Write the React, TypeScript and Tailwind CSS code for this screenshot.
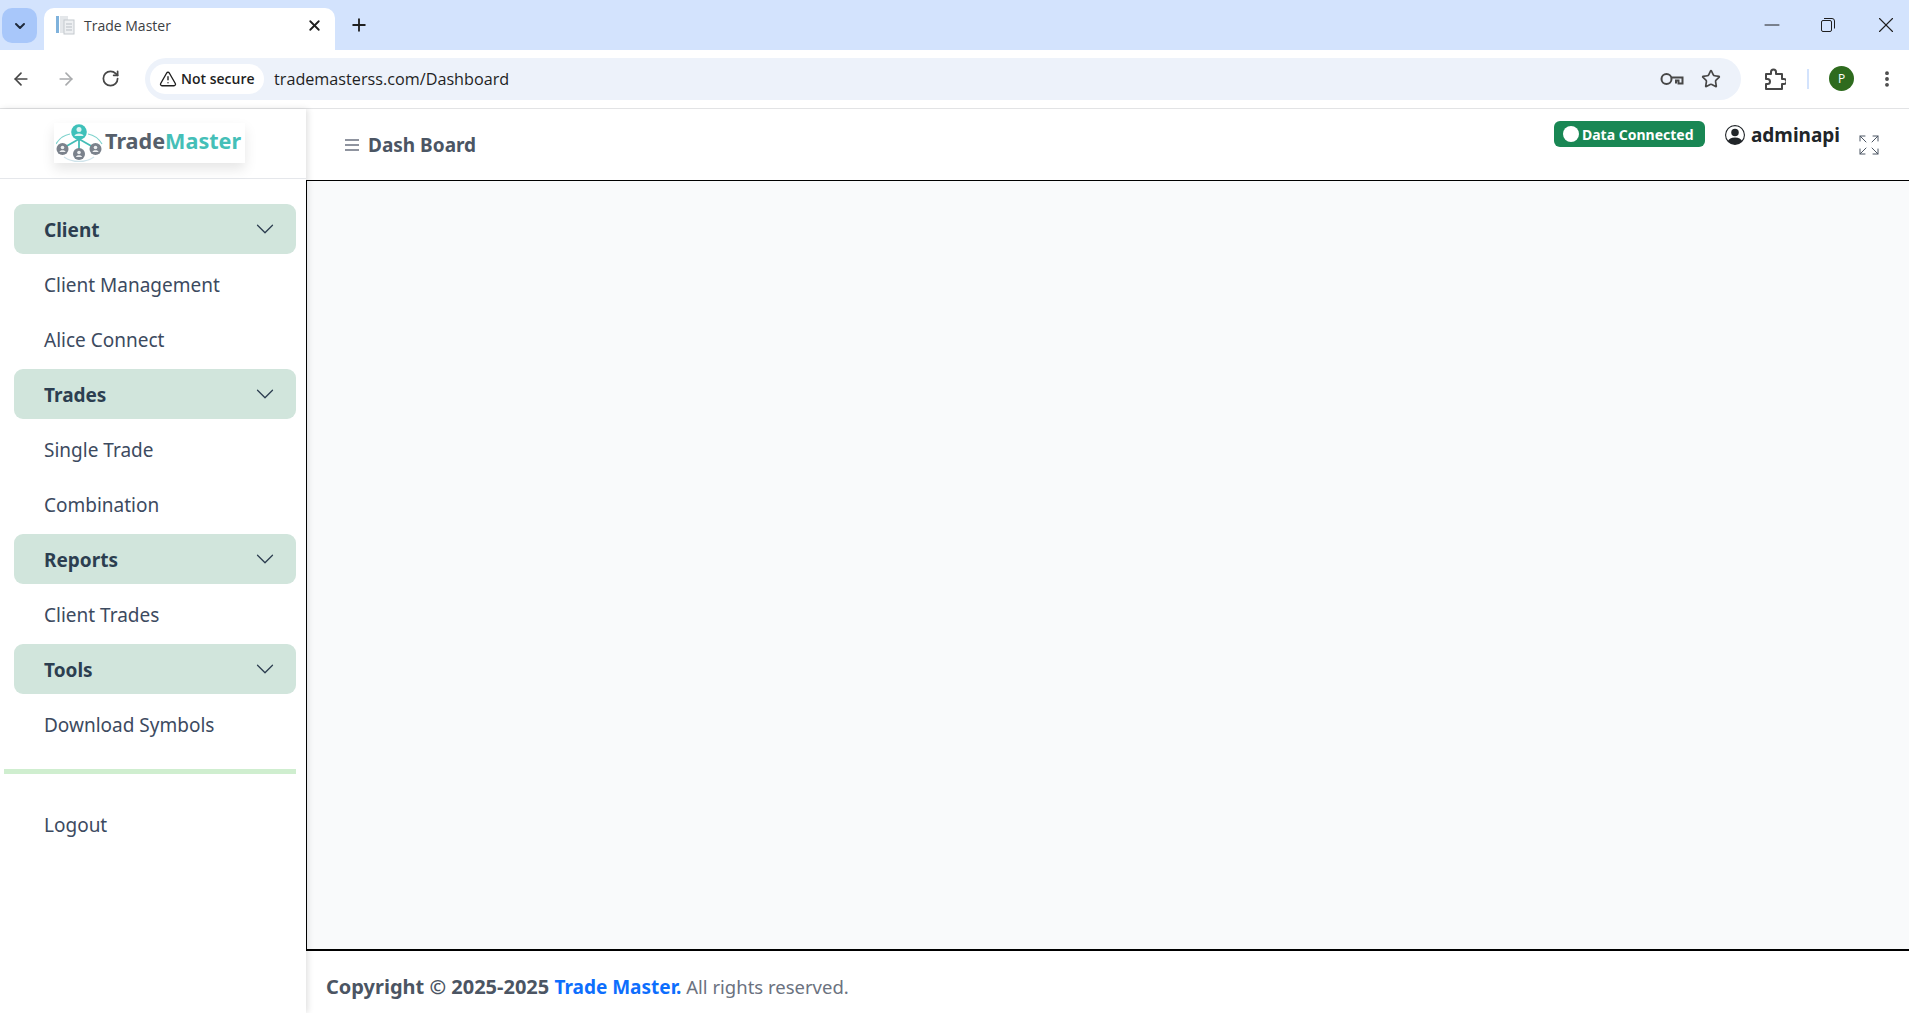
import { ArrowLeft, ArrowRight, Expand, Minus, Plus, RotateCw, Star, TriangleAlert, X, ChevronDown, EllipsisVertical } from 'lucide-react';
import { BsChevronDown, BsPersonCircle } from 'react-icons/bs';

const menu = [
  { title: 'Client', items: ['Client Management', 'Alice Connect'] },
  { title: 'Trades', items: ['Single Trade', 'Combination'] },
  { title: 'Reports', items: ['Client Trades'] },
  { title: 'Tools', items: ['Download Symbols'] },
];

function TabFavicon() {
  return (
    <svg width="20" height="20" viewBox="0 0 20 20">
      <rect x="1" y="1" width="3" height="17" fill="#7fb2dc" />
      <rect x="5" y="1" width="8" height="17" fill="#e4e7ea" />
      <rect x="9" y="5" width="10" height="14" fill="#eef0f2" stroke="#c4c9ce" strokeWidth="1" />
      <path d="M11 9h6M11 12h6M11 15h6" stroke="#b9bfc5" strokeWidth="1" />
    </svg>
  );
}

function Restore() {
  return (
    <svg width="14" height="14" viewBox="0 0 14 14" fill="none" stroke="#1f1f1f" strokeWidth="1">
      <rect x="0.5" y="2.5" width="10" height="11" rx="1.5" />
      <path d="M3 0.5h8a2.5 2.5 0 0 1 2.5 2.5v7.5" />
    </svg>
  );
}

function KeyIcon() {
  return (
    <svg width="24" height="14" viewBox="0 0 24 14" fill="none" stroke="#474747" strokeWidth="2">
      <circle cx="6.5" cy="7" r="5" />
      <path d="M11.5 5.5h11v6h-4v-3h-2.500v3" />
    </svg>
  );
}

function PuzzleIcon() {
  return (
    <svg width="22" height="22" viewBox="0 0 22 22" fill="none" stroke="#474747" strokeWidth="2" strokeLinejoin="round">
      <path d="M2 6h5V4a2.500 2.500 0 0 1 5 0v2h6v5h2a2.500 2.500 0 0 1 0 5h-2v5H2v-5h1.500a2.500 2.500 0 0 0 0-5H2z" />
    </svg>
  );
}

function LogoMark() {
  const people = [
    { cx: 6.5, cy: 25 },
    { cx: 23, cy: 30 },
    { cx: 39.5, cy: 25 },
  ];
  return (
    <svg width="47" height="38" viewBox="0 0 47 38" fill="none">
      <path d="M0 20C3 15 8 11 14 10M32 10c6 1 11 5 14 10" stroke="#7fd3cd" strokeWidth="1.200" />
      <path d="M8 33c8 6 22 6 30 0" stroke="#cfe3ea" strokeWidth="1.500" />
      <path d="M23 14v12M23 15L9 23M23 15l14 8" stroke="#45bdb7" strokeWidth="1.800" />
      <circle cx="23" cy="8" r="7.800" fill="#3fc1ba" />
      <circle cx="23" cy="5.500" r="2.500" fill="#dff5f3" />
      <path d="M18.500 12c0-3.500 9-3.500 9 0z" fill="#dff5f3" />
      {people.map((p) => (
        <g key={p.cx}>
          <circle cx={p.cx} cy={p.cy} r="6" fill="#7b828c" />
          <circle cx={p.cx} cy={p.cy - 1.5} r="1.800" fill="#eceef0" />
          <path d={`M${p.cx - 3} ${p.cy + 3}c0-2.500 6-2.500 6 0z`} fill="#eceef0" />
        </g>
      ))}
    </svg>
  );
}

function BrowserChrome() {
  return (
    <div className="shrink-0 font-['Open_Sans',sans-serif]">
      <div className="h-[50px] bg-[#d3e3fd] flex items-start pl-[2px] pt-[8px]">
        <div className="w-[35px] h-[35px] rounded-[10px] bg-[#a8c7fa] flex items-center justify-center">
          <ChevronDown size={16} strokeWidth={3} color="#1f2a3c" />
        </div>
        <div className="ml-[7px] w-[291px] h-[42px] bg-white rounded-t-[10px] flex items-center pl-[11px] pr-[12px] pb-[8px]">
          <TabFavicon />
          <span className="ml-[9px] text-[14px] text-[#3c4043] flex-1">Trade Master</span>
          <X size={17} strokeWidth={2.6} color="#1f1f1f" />
        </div>
        <div className="ml-[14px] h-[34px] flex items-center">
          <Plus size={20} strokeWidth={2.2} color="#1f1f1f" />
        </div>
        <div className="ml-auto -mr-[5px] flex h-[34px] items-center">
          <div className="w-[57px] flex justify-center"><Minus size={24} strokeWidth={1} color="#1f1f1f" /></div>
          <div className="w-[57px] flex justify-center pr-[2px]"><Restore /></div>
          <div className="w-[57px] flex justify-center"><X size={26} strokeWidth={1} color="#1f1f1f" /></div>
        </div>
      </div>
      <div className="h-[59px] bg-white border-b border-[#e2e3e5] flex items-center pb-[1px]">
        <div className="w-[145px] flex items-center pl-[11px] gap-[25px]">
          <ArrowLeft size={20} strokeWidth={2} color="#474747" />
          <ArrowRight size={20} strokeWidth={2} color="#a9abad" />
          <RotateCw size={19} strokeWidth={2.2} color="#474747" />
        </div>
        <div className="w-[1596px] h-[42px] bg-[#edf2fa] rounded-full flex items-center pl-[5px] pr-[20px]">
          <div className="h-[30px] w-[114px] bg-white rounded-full flex items-center pl-[9px] gap-[4px]">
            <TriangleAlert size={18} strokeWidth={1.8} color="#1f1f1f" />
            <span className="text-[14px] font-semibold text-[#1f1f1f] whitespace-nowrap">Not secure</span>
          </div>
          <span className="ml-[10px] pt-[1px] text-[16.2px] text-[#1f1f1f] flex-1">trademasterss.com/Dashboard</span>
          <KeyIcon />
          <div className="ml-[17px]"><Star size={20} strokeWidth={2} color="#474747" /></div>
        </div>
        <div className="ml-[23px]"><PuzzleIcon /></div>
        <div className="ml-[21px] w-[2px] h-[20px] bg-[#d3e3fd]" />
        <div className="ml-[20px] w-[25px] h-[25px] rounded-full bg-[#2e6b1e] text-white text-[12px] flex items-center justify-center">P</div>
        <div className="ml-[23px]"><EllipsisVertical size={20} strokeWidth={2.6} color="#474747" /></div>
      </div>
    </div>
  );
}

function Sidebar() {
  return (
    <aside className="w-[306px] shrink-0 bg-white shadow-[2px_0_6px_rgba(0,0,0,0.12)] z-10 flex flex-col">
      <div className="h-[70px] border-b border-[#e5e7eb] flex items-start pl-[54px] pt-[14px]">
        <div className="w-[191px] h-[40px] bg-white shadow-[0_6px_12px_rgba(0,0,0,0.1)] flex items-center pl-[2px]">
          <LogoMark />
          <span className="ml-[2px] text-[21.6px] leading-none font-bold whitespace-nowrap pb-[4px]">
            <span className="text-[#565f6b]">Trade</span>
            <span className="text-[#45bfb8]">Master</span>
          </span>
        </div>
      </div>
      <nav className="pt-[25px] pl-[14px] pr-[10px]">
        {menu.map((group) => (
          <div key={group.title} className="mb-[1px]">
            <div className="h-[50px] bg-[#d1e5dc] rounded-[9px] flex items-center justify-between pl-[30px] pr-[21px]">
              <span className="text-[19px] font-bold text-[#2c3e50] pt-[2px]">{group.title}</span>
              <BsChevronDown size={20} color="#2c3e50" />
            </div>
            <div className="pt-[4px]">
              {group.items.map((item) => (
                <div key={item} className="h-[55px] flex items-center pl-[30px] text-[19px] text-[#3c4a60]">{item}</div>
              ))}
            </div>
          </div>
        ))}
      </nav>
      <div className="mt-[15px] ml-[4px] w-[292px] h-[5px] bg-[#cfeecf]" />
      <div className="mt-[24px] h-[55px] flex items-center pl-[44px] text-[19px] text-[#3c4a60]">Logout</div>
    </aside>
  );
}

export default function App() {
  return (
    <div className="h-[1013px] w-[1909px] overflow-hidden bg-white flex flex-col font-['Noto_Sans',sans-serif]">
      <BrowserChrome />
      <div className="flex-1 flex min-h-0">
        <Sidebar />
        <main className="flex-1 flex flex-col min-w-0">
          <header className="h-[71px] shrink-0 flex items-start justify-between pl-[39px] pr-[28px]">
            <div className="flex items-center gap-[9px] pt-[22px] text-[#4b5563]">
              <svg width="14" height="12" viewBox="0 0 14 12" stroke="#6b7280" strokeWidth="1.500">
                <path d="M0 1h14M0 6h14M0 11h14" />
              </svg>
              <span className="text-[19px] font-bold leading-[28px]">Dash Board</span>
            </div>
            <div className="flex items-start pt-[12px]">
              <div className="h-[26px] w-[151px] bg-[#198754] rounded-[6px] flex items-center pl-[9px] gap-[3px] text-white">
                <span className="w-[16px] h-[16px] rounded-full bg-white" />
                <span className="text-[14px] font-bold whitespace-nowrap">Data Connected</span>
              </div>
              <div className="ml-[20px] flex items-center gap-[6px] h-[28px] text-[#212529]">
                <BsPersonCircle size={20} />
                <span className="text-[19px] font-bold">adminapi</span>
              </div>
              <div className="ml-[17px] mt-[12px]">
                <Expand size={24} strokeWidth={1} color="#4b5563" />
              </div>
            </div>
          </header>
          <div className="h-[771px] shrink-0 bg-[#f9fafb] border-t border-l border-black border-b-2" />
          <footer className="flex-1 flex items-center pl-[20px] pt-[10px] text-[#6b7280]">
            <span className="text-[20px] font-bold text-[#4b5563]">Copyright © 2025-2025&nbsp;</span>
            <span className="text-[19px] font-bold text-[#0d6efd]">Trade Master.</span>
            <span className="text-[18.5px]">&nbsp;All rights reserved.</span>
          </footer>
        </main>
      </div>
    </div>
  );
}
